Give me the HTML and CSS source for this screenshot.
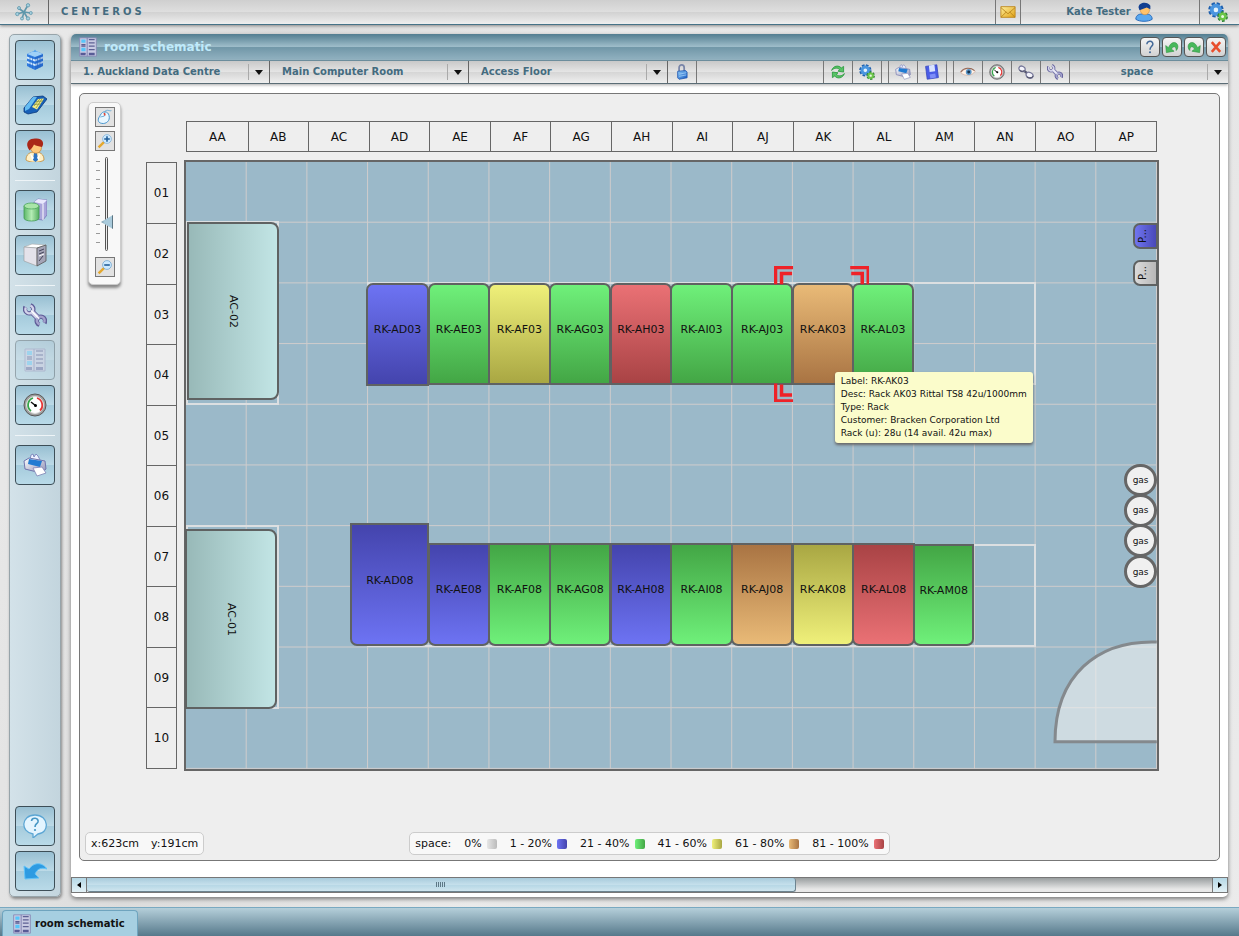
FILE: index.html
```html
<!DOCTYPE html>
<html lang="en">
<head>
<meta charset="utf-8">
<title>CenterOS - room schematic</title>
<link rel="stylesheet" href="styles.css">
</head>
<body>
<svg class="sprite" aria-hidden="true">
  <defs>
    <linearGradient id="blue" x1="0" y1="0" x2="1" y2="1"><stop offset="0" stop-color="#8ccaf8"/><stop offset="1" stop-color="#1558c0"/></linearGradient>
    <linearGradient id="silver" x1="0" y1="0" x2="1" y2="1"><stop offset="0" stop-color="#fff"/><stop offset="1" stop-color="#8d8fb4"/></linearGradient>
    <linearGradient id="green" x1="0" y1="0" x2="1" y2="0"><stop offset="0" stop-color="#5cb868"/><stop offset=".5" stop-color="#b4ecb4"/><stop offset="1" stop-color="#55ae60"/></linearGradient>
    <linearGradient id="gold" x1="0" y1="0" x2="1" y2="1"><stop offset="0" stop-color="#fff0a0"/><stop offset="1" stop-color="#e0a010"/></linearGradient>
  </defs>
  <symbol id="i-logo" viewBox="0 0 18 18"><g stroke="#5f97ab" stroke-width="1.6" fill="#a5d0df"><path d="M9 9L13 2M9 9L3 5M9 9L2 11M9 9L7 16M9 9L13 16M9 9L16 10M9 9L6 7"/><g stroke-width=".8"><circle cx="13" cy="2.300" r="1.700"/><circle cx="4" cy="5" r="1.500"/><circle cx="2.300" cy="11" r="1.700"/><circle cx="7" cy="15.500" r="1.500"/><circle cx="13" cy="15.500" r="1.700"/><circle cx="15.800" cy="10" r="1.500"/></g></g></symbol>
  <symbol id="i-room" viewBox="0 0 24 24"><path d="M4 6L12 2.500L20 6V18L12 22L4 18Z" fill="#2f7ade"/><path d="M4 6L12 2.500L20 6L12 9Z" fill="#9fd0f7"/><path d="M10 4L12 1.500L14 4Z" fill="#5aa6ec"/><path d="M4 8.500L12 11.500L20 8.500V10.500L12 13.500L4 10.500ZM4 13L12 16L20 13V15L12 18L4 15Z" fill="#d4ebfd"/><path d="M12 9V22L20 18V6Z" fill="#0d3f9c" opacity=".25"/><path d="M7 8V19.500M9.500 9V20.500M14.500 9V20.500M17 8V19.500" stroke="#2364c4" stroke-width=".6"/></symbol>
  <symbol id="i-phone" viewBox="0 0 24 24"><path d="M1 15L10 4L20 3L24 6L14 19L5 21L1 19Z" fill="#1760b8" stroke="#0a397c" stroke-width=".8"/><path d="M2 14L10 4L14 4L6 16L2 18Z" fill="#64bcf2"/><path d="M9 14L15 6L21 5.500L14 16.500Z" fill="#f5ec84"/><path d="M11 13L17 5.800M13 15L19 5.800M11 11.500L18 11M13 8.500L20 8" stroke="#7c8a40" stroke-width=".7"/></symbol>
  <symbol id="i-person" viewBox="0 0 24 24"><path d="M3 22C3 16 7 14 12 14C17 14 21 16 21 22C17 25 7 25 3 22Z" fill="#fff0c6" stroke="#c18a36" stroke-width=".8"/><path d="M11 15H14L15 22L12.500 24L10 22Z" fill="#2b72c4"/><path d="M7 15L11 20L9 22ZM17 15L14 20L16 22Z" fill="#fff"/><ellipse cx="13" cy="9.500" rx="5.500" ry="5.800" fill="#ffc77a" stroke="#c7853c" stroke-width=".7"/><path d="M5 10C2 3 8 0 13 .5C19 0 22 5 19 9C16 8 13 8 11 6.500C10 9 8 11 6.500 12.500Z" fill="#aa2718"/></symbol>
  <symbol id="i-store" viewBox="0 0 24 24"><path d="M11 4L15 1L24 2V17L20 22L11 21Z" fill="#a9a5da" stroke="#706db2" stroke-width=".7"/><path d="M11 4L15 1L24 2L20 6Z" fill="#e9e8fd"/><path d="M20 6V22" stroke="#fff"/><path d="M1 8V20C1 24 16 24 16 20V8Z" fill="url(#green)" stroke="#439a54" stroke-width=".8"/><ellipse cx="8.500" cy="8" rx="7.500" ry="3" fill="#a9e5a8" stroke="#4aa65c" stroke-width=".8"/></symbol>
  <symbol id="i-server" viewBox="0 0 24 24"><path d="M1 4L9 1L23 2L14 5Z" fill="#fff" stroke="#aaa" stroke-width=".6"/><path d="M1 4L14 5V23L1 18Z" fill="#e4e2ea" stroke="#999" stroke-width=".6"/><path d="M14 5L23 2V18L14 23Z" fill="#a4a4b6" stroke="#555" stroke-width=".8"/><path d="M16 8L21 6M16 11L21 9M16 18L20 13" stroke="#44445a"/><path d="M16 13L21 11" stroke="#fff"/></symbol>
  <symbol id="i-wrench" viewBox="0 0 24 24"><g fill="none" stroke="#5f5d98"><path d="M8.500 8.500L16 16" stroke-width="6"/><path d="M2.500 4A4.200 4.200 0 1 0 7.500 2.200" stroke-width="4.400"/><path d="M21.500 20A4.200 4.200 0 1 0 16.500 21.800" stroke-width="4.400"/></g><g fill="none" stroke="#d3d3ea"><path d="M8.500 8.500L16 16" stroke-width="4"/><path d="M2.900 4.500A3.900 3.900 0 1 0 7.300 2.700" stroke-width="2.400"/></g><path d="M21.100 19.500A3.900 3.900 0 1 0 16.700 21.300" fill="none" stroke="#a3a2cd" stroke-width="2.400"/><path d="M8 7.500L16 15.500" stroke="#fff" stroke-width="1.200"/></symbol>
  <symbol id="i-rack" viewBox="0 0 24 24"><path d="M2 1H22V23H2Z" fill="#c9cbe3" stroke="#8486b3"/><path d="M11 1V23" stroke="#7375a8"/><path d="M4 3H9V7H4ZM4 13H9V17H4Z" fill="#57c6fa"/><path d="M4 9H9M4 11H9M4 20H9M13 3H20M13 7H20M13 11H20M13 15H20" stroke="#5d6094" stroke-width="1.500"/><path d="M3 19H9V22H3ZM13 19H20V22H13Z" fill="#585b96"/></symbol>
  <symbol id="i-gauge" viewBox="0 0 24 24"><circle cx="12" cy="12" r="11" fill="#a0a0a0" stroke="#585858"/><circle cx="12" cy="12" r="8.500" fill="#fff" stroke="#ddd"/><path d="M8 18A7.500 7.500 0 0 1 10 5" fill="none" stroke="#35a54a" stroke-width="1.800"/><path d="M14 5A7.500 7.500 0 0 1 17 17.500" fill="none" stroke="#e53535" stroke-width="1.800"/><path d="M13 13L8 9" stroke="#111" stroke-width="1.500"/><circle cx="12.500" cy="12.500" r="1.500"/></symbol>
  <symbol id="i-printer" viewBox="0 0 24 24"><path d="M7 7L8 2L10 1L11 4L13 1L15 3L18 9Z" fill="#eef2ff" stroke="#6f77b5" stroke-width=".8"/><path d="M1 8L6 5L22 8L23 16L18 20L2 16Z" fill="url(#silver)" stroke="#6f74ad"/><path d="M6 6L19 8L17 14L5 11Z" fill="#217bd2"/><path d="M10 15L19 14L23 20L14 23Z" fill="#fff" stroke="#7d82b4" stroke-width=".8"/></symbol>
  <symbol id="i-help" viewBox="0 0 24 24"><path d="M12 1C26 1 27 19 15 20L10 24L10 20C-3 18-2 1 12 1Z" fill="#e4f5ff" stroke="#5ca6d4" stroke-width="1.300"/><path d="M8.500 7C9 3 16 3.500 15 8C14 10 12 10 12 13" fill="none" stroke="#4596c4" stroke-width="1.600"/><circle cx="12" cy="16" r="1.100" fill="#4596c4"/></symbol>
  <symbol id="i-back" viewBox="0 0 24 24"><path d="M1 7L6 10C12 2 20 4 24 10C18 8 14 10 12 15L16 19L2 20Z" fill="#2d9be2" stroke="#62c3f8"/></symbol>
  <symbol id="i-gears" viewBox="0 0 24 24"><circle cx="9.500" cy="9.500" r="6.500" fill="none" stroke="#1d5fae" stroke-width="5.500" stroke-dasharray="3.300 1.800"/><circle cx="9.500" cy="9.500" r="5" fill="#e2f2fc" stroke="#4a95df" stroke-width="4.500"/><circle cx="17.500" cy="17.500" r="4.200" fill="none" stroke="#2f8436" stroke-width="4.500" stroke-dasharray="2.600 1.800"/><circle cx="17.500" cy="17.500" r="3.300" fill="#e8f9e0" stroke="#6cc548" stroke-width="3"/></symbol>
  <symbol id="i-mail" viewBox="0 0 18 16"><path d="M1 2H17V14H1Z" fill="url(#gold)" stroke="#bd861d"/><path d="M1 3L9 10L17 3M1 14L7 8M17 14L11 8" fill="none" stroke="#b8851d"/></symbol>
  <symbol id="i-user" viewBox="0 0 20 22"><path d="M1 19C1 14 5 13 10 13C15 13 19 14 19 19C15 22 5 22 1 19Z" fill="#5aa8ef" stroke="#2567b7"/><circle cx="11" cy="9" r="5" fill="#ffc36c" stroke="#c98637" stroke-width=".6"/><path d="M4 6C4 0 14-1 17 4V8L13 6L5 9Z" fill="#123f91"/></symbol>
  <symbol id="i-lock" viewBox="0 0 18 22"><path d="M5 11V5C5 0 12 0 12 5V10" fill="none" stroke="#7885a8" stroke-width="2.400"/><path d="M3 10L14 9L16 11V19L5 21L3 19Z" fill="url(#blue)" stroke="#164eac"/><path d="M5 14L15 12M5 17L15 15" stroke="#a7d4fb"/></symbol>
  <symbol id="i-refresh" viewBox="0 0 20 20"><path d="M2 8C4 2 11 1 14 5L17 3L17 10L10 9L12 7C9 4 5 5 2 8Z" fill="#58c466" stroke="#26953a"/><path d="M18 12C16 18 9 19 6 15L3 17V10L10 11L8 13C11 16 15 15 18 12Z" fill="#58c466" stroke="#26953a"/></symbol>
  <symbol id="i-save" viewBox="0 0 20 20"><path d="M2 3L16 1L18 17L4 19Z" fill="#4a5ce5" stroke="#3545bd"/><path d="M6 2L13 1L14 9L7 10Z" fill="#d9e3ff"/><path d="M7 13L14 12L15 17L8 18Z" fill="#7d8df8"/></symbol>
  <symbol id="i-eye" viewBox="0 0 22 20"><path d="M1 11C6 4 15 4 21 9C16 16 7 16 1 11Z" fill="#fff2e8" stroke="#c9a08e" stroke-width=".8"/><circle cx="12" cy="10" r="4" fill="#5b97c9"/><circle cx="12" cy="10" r="2" fill="#18334d"/><path d="M1 10C5 4 14 3 20 8" fill="none" stroke="#946654" stroke-width="1.500"/></symbol>
  <symbol id="i-link" viewBox="0 0 20 20"><path d="M7 8L12 12" stroke="#55566e" stroke-width="3"/><g fill="#f4f4fb" stroke="#77789a" stroke-width="1.600"><ellipse cx="5" cy="6" rx="4" ry="3.200" transform="rotate(25 5 6)"/><ellipse cx="14.500" cy="14" rx="4.500" ry="3.400" transform="rotate(25 14.500 14)"/></g><path d="M2 8C4 10 7 9 8 8M11 16C13 18 17 18 19 15" fill="none" stroke="#55566e" stroke-width="1.400"/></symbol>
  <symbol id="i-mouse" viewBox="0 0 20 20"><path d="M4 8C7 1 14 3 15 8C17 15 11 19 6 18C0 17 1 12 4 8Z" fill="#e8f6ff" stroke="#4392cc" stroke-width="1.200"/><path d="M10 4L9 9L4 10M10 3C13 0 15 3 18 2" fill="none" stroke="#55a1d3"/><path d="M9 5L10 8" stroke="#e04a38" stroke-width="2"/></symbol>
  <symbol id="i-zoomin" viewBox="0 0 20 20"><path d="M2 18L9 11" stroke="#e4a82e" stroke-width="3"/><circle cx="12.500" cy="7.500" r="5.500" fill="#cdeaff" stroke="#84b3d8"/><path d="M9 7.500H16M12.500 4V11" stroke="#215e99" stroke-width="2"/></symbol>
  <symbol id="i-zoomout" viewBox="0 0 20 20"><path d="M2 18L9 11" stroke="#e4a82e" stroke-width="3"/><circle cx="12.500" cy="7.500" r="5.500" fill="#cdeaff" stroke="#72a8d3"/><path d="M9 7.500H16" stroke="#215e99" stroke-width="2"/></symbol>
  <symbol id="i-query" viewBox="0 0 20 20"><path d="M5.500 6C6 0 15 1 14 6.500C13 10 10 9 10 14" fill="none" stroke="#456a99" stroke-width="2.200"/><circle cx="10" cy="17.500" r="1.500" fill="#456a99"/></symbol>
  <symbol id="i-undo" viewBox="0 0 20 20"><path d="M1 8L5 11C8 3 15 1 18 7C19 10 18 13 16 15C16 10 13 7 9 13L13 16L2 18Z" fill="#48b85c" stroke="#268f3a" stroke-width=".8"/></symbol>
  <symbol id="i-close" viewBox="0 0 20 20"><path d="M4 3L16 17M16 3L4 17" stroke="#e84f2d" stroke-width="3.600"/></symbol>
</svg>

<header class="topbar">
  <a class="topbar-logo" href="#" aria-label="Home"><svg class="ic18"><use href="#i-logo"/></svg></a>
  <h1 class="brand">CENTEROS</h1>
  <button class="topbar-mail" aria-label="Messages"><svg class="ic16"><use href="#i-mail"/></svg></button>
  <button class="topbar-user">Kate Tester<svg class="ic20"><use href="#i-user"/></svg></button>
  <button class="topbar-settings" aria-label="Settings"><svg class="ic20"><use href="#i-gears"/></svg></button>
</header>

<div class="desktop">
  <nav class="dock" aria-label="Modules">
    <button class="dock-btn" aria-label="Rooms"><svg class="ic24"><use href="#i-room"/></svg></button>
    <button class="dock-btn" aria-label="Contacts"><svg class="ic24"><use href="#i-phone"/></svg></button>
    <button class="dock-btn" aria-label="Customers"><svg class="ic24"><use href="#i-person"/></svg></button>
    <hr class="dock-sep">
    <button class="dock-btn" aria-label="Inventory"><svg class="ic24"><use href="#i-store"/></svg></button>
    <button class="dock-btn" aria-label="Servers"><svg class="ic24"><use href="#i-server"/></svg></button>
    <hr class="dock-sep">
    <button class="dock-btn" aria-label="Tools"><svg class="ic24"><use href="#i-wrench"/></svg></button>
    <button class="dock-btn" aria-label="Schematic" disabled><svg class="ic24"><use href="#i-rack"/></svg></button>
    <button class="dock-btn" aria-label="Monitoring"><svg class="ic24"><use href="#i-gauge"/></svg></button>
    <hr class="dock-sep">
    <button class="dock-btn" aria-label="Print"><svg class="ic24"><use href="#i-printer"/></svg></button>
    <button class="dock-btn dock-end" aria-label="Help"><svg class="ic24"><use href="#i-help"/></svg></button>
    <button class="dock-btn" aria-label="Back"><svg class="ic24"><use href="#i-back"/></svg></button>
  </nav>

  <main class="window">
    <div class="titlebar">
      <svg class="ic20"><use href="#i-rack"/></svg>
      <h2 class="title">room schematic</h2>
      <div class="window-btns">
        <button class="win-btn" aria-label="Help"><svg class="ic14"><use href="#i-query"/></svg></button>
        <button class="win-btn" aria-label="Undo"><svg class="ic14"><use href="#i-undo"/></svg></button>
        <button class="win-btn" aria-label="Redo"><svg class="ic14 flip"><use href="#i-undo"/></svg></button>
        <button class="win-btn" aria-label="Close"><svg class="ic14"><use href="#i-close"/></svg></button>
      </div>
    </div>

    <div class="toolbar">
      <label class="picker"><select aria-label="Data centre"><option>1. Auckland Data Centre</option></select></label>
      <label class="picker"><select aria-label="Room"><option>Main Computer Room</option></select></label>
      <label class="picker"><select aria-label="Floor"><option>Access Floor</option></select></label>
      <button class="tool" aria-label="Lock"><svg class="ic16"><use href="#i-lock"/></svg></button>
      <div class="tools">
        <div class="tool-group">
          <button class="tool" aria-label="Refresh"><svg class="ic16"><use href="#i-refresh"/></svg></button>
          <button class="tool" aria-label="Options"><svg class="ic16"><use href="#i-gears"/></svg></button>
        </div>
        <div class="tool-group">
          <button class="tool" aria-label="Print"><svg class="ic16"><use href="#i-printer"/></svg></button>
          <button class="tool" aria-label="Save"><svg class="ic16"><use href="#i-save"/></svg></button>
        </div>
        <div class="tool-group">
          <button class="tool" aria-label="View"><svg class="ic16"><use href="#i-eye"/></svg></button>
          <button class="tool" aria-label="Metrics"><svg class="ic16"><use href="#i-gauge"/></svg></button>
          <button class="tool" aria-label="Links"><svg class="ic16"><use href="#i-link"/></svg></button>
          <button class="tool" aria-label="Edit"><svg class="ic16"><use href="#i-wrench"/></svg></button>
        </div>
      </div>
      <label class="picker picker-mode"><select aria-label="Colour by"><option>space</option></select></label>
    </div>

    <section class="canvas">
      <div class="plan">
        <div class="zoomer">
          <button class="zoom-btn" aria-label="Pan"><svg class="ic16"><use href="#i-mouse"/></svg></button>
          <button class="zoom-btn" aria-label="Zoom in"><svg class="ic16"><use href="#i-zoomin"/></svg></button>
          <input class="zoom-range" type="range" min="0" max="100" value="27" aria-label="Zoom">
          <button class="zoom-btn" aria-label="Zoom out"><svg class="ic16"><use href="#i-zoomout"/></svg></button>
        </div>
        <div class="cols">
          <span>AA</span><span>AB</span><span>AC</span><span>AD</span><span>AE</span><span>AF</span><span>AG</span><span>AH</span><span>AI</span><span>AJ</span><span>AK</span><span>AL</span><span>AM</span><span>AN</span><span>AO</span><span>AP</span>
        </div>
        <div class="rows">
          <span>01</span><span>02</span><span>03</span><span>04</span><span>05</span><span>06</span><span>07</span><span>08</span><span>09</span><span>10</span>
        </div>
        <div class="floor">
          <div class="node zone" style="--x:2.98;--y:1.97;--w:11.02;--h:1.7"></div>
          <div class="node zone" style="--x:2.98;--y:6.3;--w:11.02;--h:1.7"></div>
          <div class="node zone" style="--x:0;--y:.97;--w:1.54;--h:3.03"></div>
          <div class="node zone" style="--x:0;--y:5.98;--w:1.54;--h:3.03"></div>

          <div class="node ac" style="--x:.01;--y:.99;--w:1.52;--h:2.94"><span class="turned">AC-02</span></div>
          <div class="node ac" style="--x:-.02;--y:6.05;--w:1.52;--h:2.97"><span class="turned">AC-01</span></div>

          <div class="node rack up blue" style="--x:2.96;--y:1.99;--w:1.05;--h:1.7">RK-AD03</div>
          <div class="node rack up green" style="--x:3.98;--y:1.99;--w:1.03;--h:1.68">RK-AE03</div>
          <div class="node rack up yellow" style="--x:4.98;--y:1.99;--w:1.03;--h:1.68">RK-AF03</div>
          <div class="node rack up green" style="--x:5.98;--y:1.99;--w:1.03;--h:1.68">RK-AG03</div>
          <div class="node rack up red" style="--x:6.98;--y:1.99;--w:1.03;--h:1.68">RK-AH03</div>
          <div class="node rack up green" style="--x:7.98;--y:1.99;--w:1.03;--h:1.68">RK-AI03</div>
          <div class="node rack up green" style="--x:8.98;--y:1.99;--w:1.03;--h:1.68">RK-AJ03</div>
          <div class="node rack up orange" style="--x:9.98;--y:1.99;--w:1.03;--h:1.68">RK-AK03</div>
          <div class="node rack up green" style="--x:10.98;--y:1.99;--w:1.01;--h:1.68">RK-AL03</div>

          <div class="node rack down blue" style="--x:2.71;--y:5.95;--w:1.3;--h:2.03">RK-AD08</div>
          <div class="node rack down blue" style="--x:3.98;--y:6.27;--w:1.03;--h:1.7">RK-AE08</div>
          <div class="node rack down green" style="--x:4.98;--y:6.27;--w:1.03;--h:1.7">RK-AF08</div>
          <div class="node rack down green" style="--x:5.98;--y:6.27;--w:1.03;--h:1.7">RK-AG08</div>
          <div class="node rack down blue" style="--x:6.98;--y:6.27;--w:1.03;--h:1.7">RK-AH08</div>
          <div class="node rack down green" style="--x:7.98;--y:6.27;--w:1.03;--h:1.7">RK-AI08</div>
          <div class="node rack down orange" style="--x:8.98;--y:6.27;--w:1.03;--h:1.7">RK-AJ08</div>
          <div class="node rack down yellow" style="--x:9.98;--y:6.27;--w:1.03;--h:1.7">RK-AK08</div>
          <div class="node rack down red" style="--x:10.98;--y:6.27;--w:1.03;--h:1.7">RK-AL08</div>
          <div class="node rack down green" style="--x:11.98;--y:6.29;--w:1.01;--h:1.69">RK-AM08</div>

          <div class="node pdu pdu-used" style="--x:15.6;--y:1.01;--w:.42;--h:.43"><span class="turned">P...</span></div>
          <div class="node pdu" style="--x:15.6;--y:1.62;--w:.42;--h:.43"><span class="turned">P...</span></div>

          <div class="node gas" style="--x:15.46;--y:4.97;--w:.54;--h:.54">gas</div>
          <div class="node gas" style="--x:15.46;--y:5.47;--w:.54;--h:.54">gas</div>
          <div class="node gas" style="--x:15.46;--y:5.97;--w:.54;--h:.54">gas</div>
          <div class="node gas" style="--x:15.46;--y:6.48;--w:.54;--h:.54">gas</div>

          <svg class="node door" style="--x:14.29;--y:7.88;--w:1.71;--h:1.71" viewBox="0 0 104 104"><path d="M104 2C44 0 2 36 2 102H104"/></svg>

          <svg class="node marks" style="--x:9.69;--y:1.71;--w:1.57;--h:2.25" viewBox="0 0 95 136" aria-label="Selected rack"><path d="M1.500 18V1.500H19M7.500 18V7.500H18M94 18V1.500H76M88 18V7.500H77M1.500 117V134.500H19M7.500 118V128.500H18M94 117V134.500H76M88 118V128.500H77"/></svg>

          <div class="tip" role="tooltip" style="--x:10.69;--y:3.46">
            <div>Label: RK-AK03</div>
            <div>Desc: Rack AK03 Rittal TS8 42u/1000mm</div>
            <div>Type: Rack</div>
            <div>Customer: Bracken Corporation Ltd</div>
            <div>Rack (u): 28u (14 avail. 42u max)</div>
          </div>
        </div>
      </div>

      <footer class="status">
        <div class="chip coords"><span>x:623cm</span><span>y:191cm</span></div>
        <div class="chip legend">
          <span>space:</span>
          <span class="key">0%<i class="swatch grey"></i></span>
          <span class="key">1 - 20%<i class="swatch blue"></i></span>
          <span class="key">21 - 40%<i class="swatch green"></i></span>
          <span class="key">41 - 60%<i class="swatch yellow"></i></span>
          <span class="key">61 - 80%<i class="swatch orange"></i></span>
          <span class="key">81 - 100%<i class="swatch red"></i></span>
        </div>
      </footer>
    </section>

    <div class="scroller">
      <button class="scroll-btn" aria-label="Scroll left"><svg class="ic6" viewBox="0 0 6 6"><path d="M5 0V6L1 3Z"/></svg></button>
      <div class="scroll-track"><div class="scroll-thumb" style="width:63%"><i class="grip"></i></div></div>
      <button class="scroll-btn" aria-label="Scroll right"><svg class="ic6" viewBox="0 0 6 6"><path d="M1 0V6L5 3Z"/></svg></button>
    </div>
  </main>
</div>

<div class="taskbar">
  <button class="task"><svg class="ic20"><use href="#i-rack"/></svg>room schematic</button>
</div>
</body>
</html>
```
FILE: styles.css
```css
* { box-sizing: border-box; }

body {
  margin: 0;
  min-height: 100vh;
  display: flex;
  flex-direction: column;
  background: linear-gradient(100deg, #ececec, #dcdcdc 20%, #eaeaea 45%, #dedede 70%, #ebebeb);
  color: #111;
  font: 11px/14px Verdana, "DejaVu Sans", sans-serif;
}

button, select, input { font: inherit; color: inherit; margin: 0; }
button { padding: 0; border: 0; background: none; display: flex; align-items: center; justify-content: center; }
h1, h2 { margin: 0; font-size: 11px; font-weight: bold; }

.sprite { position: absolute; width: 0; height: 0; }
.ic6 { width: 6px; height: 8px; }
.ic14 { width: 14px; height: 14px; }
.ic16 { width: 16px; height: 16px; }
.ic18 { width: 18px; height: 18px; }
.ic20 { width: 20px; height: 20px; }
.ic24 { width: 24px; height: 24px; }
.flip { transform: scaleX(-1); }

/* top bar */
.topbar {
  display: flex;
  height: 25px;
  background: linear-gradient(#cfcfcf, #dedede 48%, #d2d2d2 52%, #eee);
  border-bottom: 1px solid #467388;
  box-shadow: 0 1px 3px #888;
  color: #436b7f;
}
.topbar-logo { width: 49px; display: flex; align-items: center; justify-content: center; border-right: 1px solid #666; }
.brand { flex: 1; padding-left: 12px; font-size: 10px; line-height: 23px; letter-spacing: 3px; }
.topbar-mail { width: 25px; border-left: 1px solid #777; }
.topbar-user { width: 179px; gap: 3px; border-left: 1px solid #777; font-size: 10px; font-weight: bold; }
.topbar-settings { width: 40px; padding-right: 4px; border-left: 1px solid #777; }

.desktop { flex: 1; display: flex; gap: 10px; padding: 9px 11px 10px 9px; }

/* left dock */
.dock {
  display: flex;
  flex-direction: column;
  gap: 5px;
  padding: 5px;
  border: 1px solid #97a4aa;
  border-radius: 5px;
  background: linear-gradient(90deg, #d3e2e9, #c3d5de);
  box-shadow: 1px 2px 3px #888;
}
.dock-btn {
  width: 40px;
  height: 40px;
  border: 1px solid #3d4e57;
  border-radius: 4px;
  background: linear-gradient(#98bfd2, #bddae7 50%, #a5cbdc 51%, #b9dae8);
}
.dock-btn:disabled { opacity: .4; }
.dock-end { margin-top: auto; }
.dock-sep { width: 100%; height: 10px; margin: 0; border: 0; background: linear-gradient(#eef4f7, #eef4f7) center / 100% 1px no-repeat; }

/* window */
.window {
  flex: 1;
  min-width: 0;
  display: flex;
  flex-direction: column;
  padding-bottom: 4px;
  border-radius: 5px;
  background: #fff;
  box-shadow: 0 2px 4px #777;
}
.titlebar {
  display: flex;
  align-items: center;
  gap: 6px;
  height: 27px;
  padding: 0 2px 0 7px;
  border-radius: 5px 5px 0 0;
  background: linear-gradient(#527d90, #9dbcc9 48%, #7197a8 52%, #92b2c1);
  border-bottom: 1px solid #5f8799;
}
.title { flex: 1; font-size: 12px; color: #bfeafb; }
.window-btns { display: flex; gap: 2px; }
.win-btn { width: 20px; height: 20px; border: 1px solid #555; border-radius: 4px; background: linear-gradient(#f5f5f5, #d2d2d2); }

.toolbar {
  display: flex;
  height: 23px;
  background: linear-gradient(#c9c9c9, #e4e4e4 48%, #d6d6d6 52%, #efefef);
  border-bottom: 1px solid #5b6d76;
  box-shadow: 0 1px 3px #aaa;
}
.picker { position: relative; width: 199px; border-right: 1px solid #666; }
.picker select {
  width: 100%;
  height: 22px;
  padding: 0 24px 0 12px;
  appearance: none;
  border: 0;
  background: none;
  color: #436b7f;
  font-size: 10px;
  font-weight: bold;
}
.picker::before { content: ""; position: absolute; right: 20px; top: 3px; bottom: 3px; width: 1px; background: #aaa; pointer-events: none; }
.picker::after { content: ""; position: absolute; right: 6px; top: 9px; border: solid transparent; border-width: 5px 4px 0; border-top-color: #111; pointer-events: none; }
.picker-mode { width: 158px; border: 0; }
.picker-mode select { padding-right: 36px; text-align-last: center; }
.tool { width: 29px; height: 22px; border-right: 1px solid #777; }
.tools { display: flex; gap: 6px; margin-left: auto; }
.tool-group { display: flex; border-left: 1px solid #777; }

/* schematic canvas */
.canvas {
  flex: 1;
  display: flex;
  flex-direction: column;
  margin: 9px 8px 16px;
  border: 1px solid #777;
  border-radius: 5px;
  background: #eee;
}
.plan {
  display: grid;
  grid-template-columns: 49px 31px 1fr;
  grid-template-rows: 31px auto;
  gap: 10px 9px;
  padding: 27px 62px 0 8px;
}
.cols, .rows { display: grid; font-size: 12px; border: 1px solid #666; }
.cols { grid-column: 3; grid-row: 1; grid-template-columns: repeat(16, 1fr); }
.rows { grid-column: 2; grid-row: 2; grid-template-rows: repeat(10, 1fr); }
.cols span, .rows span { display: flex; align-items: center; justify-content: center; }
.cols span + span { border-left: 1px solid #666; }
.rows span + span { border-top: 1px solid #666; }

.zoomer {
  grid-column: 1;
  grid-row: 1 / 3;
  align-self: start;
  display: flex;
  flex-direction: column;
  align-items: center;
  gap: 4px;
  margin-top: -19px;
  width: 33px;
  padding: 4px 0 7px;
  border: 1px solid #ccc;
  border-radius: 5px;
  background: #f8f8f8;
  box-shadow: 0 3px 3px #888;
}
.zoom-btn { width: 20px; height: 20px; border: 1px solid #777; background: #e2e2e2; }
.zoom-range {
  width: 24px;
  height: 94px;
  margin: 2px 0;
  padding-left: 4px;
  appearance: none;
  writing-mode: vertical-lr;
  direction: rtl;
  background: repeating-linear-gradient(#999 0 1px, transparent 1px 9px) 3px 4px / 4px 89px no-repeat;
}
.zoom-range::-webkit-slider-runnable-track { width: 3px; height: 88px; border: 1px solid #555; border-radius: 2px; background: #eee; }
.zoom-range::-webkit-slider-thumb { appearance: none; width: 12px; height: 14px; margin-right: -6px; margin-left: -5px; background: linear-gradient(90deg, #6d8fa0, #a9cadb 30% 88%, #5d7683 90%); clip-path: polygon(0 50%, 100% 0, 100% 100%); }

/* every node sits in tile units: --x, --y, --w, --h */
.floor {
  position: relative;
  grid-column: 3;
  grid-row: 2;
  aspect-ratio: 16 / 10;
  background:
    linear-gradient(90deg, transparent calc(100% - 1px), #cfcccc 0) 0 0 / calc(100% / 16) 100%,
    linear-gradient(transparent calc(100% - 1px), #cfcccc 0) 0 0 / 100% calc(100% / 10),
    #9bb9c9;
  box-shadow: 0 0 0 2px #666;
}
.node {
  position: absolute;
  left: calc(var(--x) * 100% / 16);
  top: calc(var(--y) * 100% / 10);
  width: calc(var(--w) * 100% / 16);
  height: calc(var(--h) * 100% / 10);
}
.zone { border: 2px solid #dcdfe1; }
.rack, .ac, .pdu, .gas { display: flex; align-items: center; justify-content: center; border: 2px solid #5f6262; font-size: 10px; }
.rack { padding-bottom: 8px; font-size: 11px; }
.up { border-radius: 7px 7px 0 0; background: linear-gradient(var(--light), var(--dark)); }
.down { border-radius: 0 0 7px 7px; background: linear-gradient(var(--dark), var(--light)); }
.blue { --light: #6d73f3; --dark: #4444ad; }
.green { --light: #6ff07a; --dark: #43a645; }
.yellow { --light: #eff07a; --dark: #a9a743; }
.orange { --light: #e9ba77; --dark: #a97443; }
.red { --light: #ea7175; --dark: #a94345; }
.grey { --light: #e6e6e6; --dark: #bbb; }
.ac { border-radius: 0 8px 8px 0; background: linear-gradient(90deg, #98b9b8, #c2e5e5); font-size: 11px; }
.turned { writing-mode: vertical-rl; }
.pdu { padding-right: 5px; border-radius: 7px 0 0 7px; background: linear-gradient(90deg, #dadada, #b8b8b8); }
.pdu .turned { transform: rotate(180deg); }
.pdu-used { background: linear-gradient(90deg, #7075f0, #4949b8); }
.gas { border: 3px solid #666; border-radius: 50%; background: #f0f0f0; font-size: 9px; }
.door path { fill: rgba(238, 240, 240, .62); stroke: #84898d; stroke-width: 3; }
.marks path { fill: none; stroke: #ee2228; stroke-width: 3.5; }
.tip {
  position: absolute;
  left: calc(var(--x) * 100% / 16);
  top: calc(var(--y) * 100% / 10);
  padding: 3px 6px;
  border-radius: 3px;
  background: #fbfccb;
  box-shadow: 0 2px 3px #666;
  font-size: 9px;
  line-height: 13px;
  white-space: nowrap;
}

.status { display: grid; grid-template-columns: 1fr auto 1fr; align-items: end; margin-top: auto; padding: 5px; }
.chip { display: flex; align-items: center; justify-self: start; height: 23px; padding: 0 5px; border: 1px solid #ccc; border-radius: 5px; background: #f8f8f8; }
.coords { gap: 12px; }
.legend { gap: 13px; }
.key { display: flex; align-items: center; gap: 5px; }
.swatch { width: 10px; height: 10px; border-radius: 2px; background: linear-gradient(90deg, var(--light), var(--dark)); }

/* horizontal scroll bar */
.scroller { display: flex; height: 16px; border: solid #777; border-width: 1px 0; }
.scroll-btn { width: 16px; background: linear-gradient(#b5d8e6, #e3f1f6); border: solid #777; border-width: 0 1px; }
.scroll-track { flex: 1; background: linear-gradient(#999e9f, #e8e8e8 80%); }
.scroll-thumb { display: flex; align-items: center; justify-content: center; height: 14px; border: solid #6d8490; border-width: 0 1px 1px 0; border-radius: 0 3px 3px 3px; background: linear-gradient(#a8cbdc, #c4dfeb 50%, #b4d6e5 51%, #cfe5ee); }
.grip { width: 9px; height: 5px; background: repeating-linear-gradient(90deg, #5d7886 0 1px, transparent 1px 2px); }

/* task bar */
.taskbar { display: flex; height: 29px; padding: 2px 2px 0; border-top: 1px solid #79a9c1; background: linear-gradient(#b5cfda, #56798b); }
.task { gap: 3px; padding: 0 12px 0 9px; border: 1px solid #6fa4be; border-bottom: 0; border-radius: 4px 4px 0 0; background: #a6cfe1; font-size: 10px; font-weight: bold; }
```
